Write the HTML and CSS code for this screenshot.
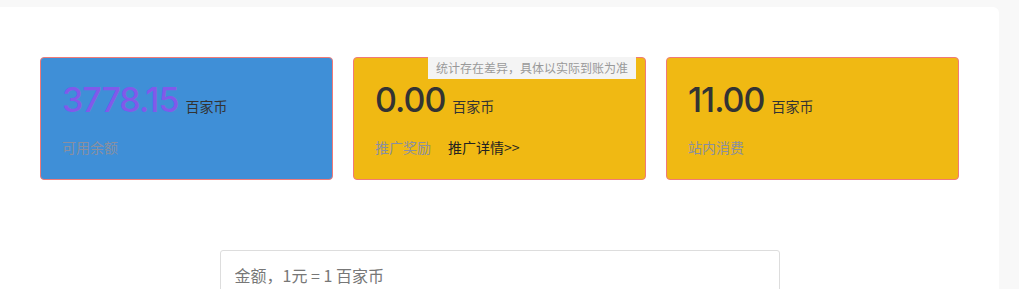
FILE: index.html
```html
<!DOCTYPE html>
<html lang="zh-CN">
<head>
<meta charset="utf-8">
<title>百家币</title>
<link rel="stylesheet" href="styles.css">
</head>
<body>
<div class="panel">
  <div class="cards">
    <div class="card card-blue">
      <div class="amount"><span class="num num-purple">3778.15</span><span class="unit">百家币</span></div>
      <div class="labels"><span class="label">可用余额</span></div>
    </div>
    <div class="card card-yellow">
      <div class="tip">统计存在差异，具体以实际到账为准</div>
      <div class="amount"><span class="num">0.00</span><span class="unit">百家币</span></div>
      <div class="labels"><span class="label">推广奖励</span><a class="detail" href="#">推广详情&gt;&gt;</a></div>
    </div>
    <div class="card card-yellow">
      <div class="amount"><span class="num">11.00</span><span class="unit">百家币</span></div>
      <div class="labels"><span class="label">站内消费</span></div>
    </div>
  </div>
  <div class="form">
    <input class="money" type="text" placeholder="金额，1元 = 1 百家币">
  </div>
</div>
</body>
</html>
```

FILE: styles.css
```css
html, body {
  margin: 0;
  padding: 0;
  background: #f8f8f8;
  font-family: "Noto Sans CJK SC", "Noto Sans", sans-serif;
}
.panel {
  margin-top: 7px;
  width: 999px;
  background: #fff;
  border-radius: 0 6px 0 0;
  padding: 50px 40px 40px;
  box-sizing: border-box;
  min-height: 400px;
}
.cards {
  display: flex;
  gap: 20px;
}
.card {
  position: relative;
  width: 293px;
  height: 123px;
  box-sizing: border-box;
  border: 1px solid #f07a78;
  border-radius: 4px;
  padding: 20px 20px 0 21px;
}
.card-blue { background: #3f8fd7; }
.card-yellow { background: #f0b913; }
.amount {
  display: flex;
  align-items: baseline;
  height: 44px;
}
.num {
  font-family: Inter, Lato, sans-serif;
  font-variant-numeric: proportional-nums;
  font-size: 34px;
  font-weight: 500;
  color: #333;
  letter-spacing: -1px;
  line-height: 44px;
}
.num-purple { color: #8159ea; }
.unit {
  font-size: 14px;
  color: #333;
  margin-left: 7px;
}
.labels {
  display: flex;
  gap: 17px;
  margin-top: 15px;
  font-size: 14px;
  line-height: 20px;
}
.label { color: #8a8f9f; }
.detail { color: #222; text-decoration: none; }
.tip {
  position: absolute;
  top: -1px;
  right: 9px;
  width: 208px;
  height: 22px;
  background: #f4f4f4;
  color: #999;
  font-size: 12px;
  line-height: 22px;
  text-align: center;
}
.form {
  display: flex;
  justify-content: center;
  margin-top: 70px;
}
.money {
  width: 560px;
  height: 54px;
  box-sizing: border-box;
  border: 1px solid #ddd;
  border-radius: 3px;
  padding: 0 14px 4px;
  font-family: "Noto Sans CJK SC", sans-serif;
  font-size: 16px;
  color: #555;
}
.money::placeholder { color: #777; }
```
